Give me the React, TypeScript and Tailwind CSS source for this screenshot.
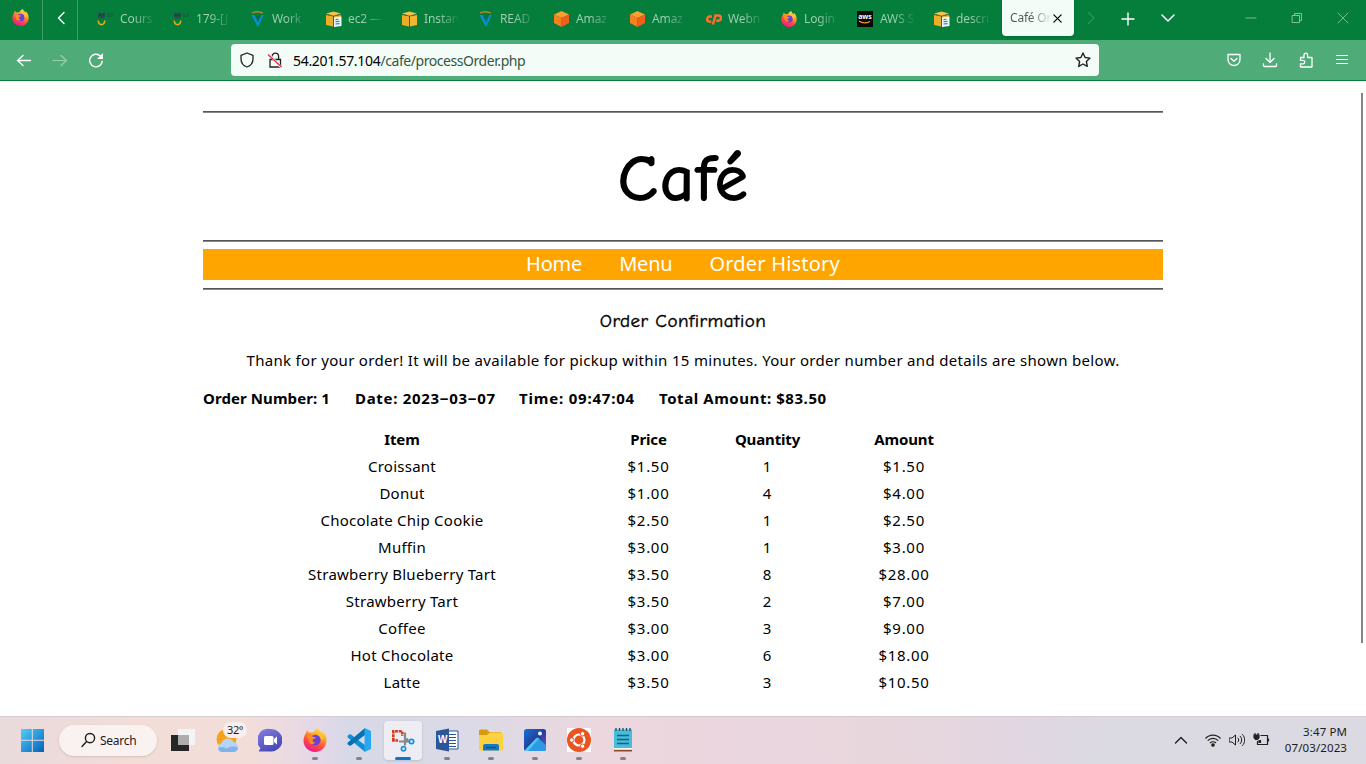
import React from "react";

type P = { size?: number };

const Fox = ({ size = 16 }: P) => (
  <svg width={size} height={size} viewBox="0 0 24 24" className="shrink-0">
    <defs>
      <linearGradient id="fx" x1="0.8" y1="0" x2="0.3" y2="1">
        <stop offset="0" stopColor="#fff14f" />
        <stop offset=".35" stopColor="#ffa026" />
        <stop offset=".65" stopColor="#ff4a45" />
        <stop offset="1" stopColor="#e8178c" />
      </linearGradient>
    </defs>
    <path d="M15.500 0c.4 2.600 2.200 3.700 3.700 5l.2-2c2.900 2.500 4.400 6 4.100 10C23.100 19.200 18.200 24 12 24 5.600 24 .6 19.200.5 12.800.5 9 2 6.300 3.500 4.500L3.700 2l2.700 2.800C8 4.300 9 4.500 10 4.800 11.500 2.500 13.200 1 15.500 0z" fill="url(#fx)" />
    <circle cx="12.300" cy="12" r="5.300" fill="#6b3fdc" />
    <path d="M4 8c3-1.500 4.500-.5 6 .8l3 .5c-.3 1.800-2.800 1.500-3.300 2.700-.2 1.500.8 2.700 2.800 2.300-2 2.700-5.500 2.200-6.500-.3C5 12 5.200 10 4 8z" fill="#ff8a22" />
    <path d="M12.500 5.500c3.500.5 5.500 3 5.500 6.500l2-1c0-4-3.500-6-7.500-5.500z" fill="#ffc535" />
  </svg>
);

const Owl = () => (
  <svg width="16" height="16" viewBox="0 0 16 16" className="shrink-0 overflow-visible">
    <path d="M1 1l2 1h3l2-1v5l-2 1.500H3L1 6z" fill="#25504a" />
    <path d="M10 3.200h2M13 3h3M10 5.200h3M14 5h2" stroke="#1b5a3e" strokeWidth="1.200" />
    <path d="M2.500 4h1.500M5.500 4H7" stroke="#123c38" strokeWidth="1.300" />
    <path d="M1.200 9.500c.5 5.500 6 5.500 6.600 0" fill="none" stroke="#e8a914" strokeWidth="1.600" />
  </svg>
);

const Vee = () => (
  <svg width="16" height="16" viewBox="0 0 16 16" className="shrink-0">
    <path d="M3 2C5.500.7 10.500.7 14 2" fill="none" stroke="#c98b28" strokeWidth="1.200" />
    <path d="M2.500 4h3L9 11.500 12.500 4h2.300L9.700 15H8.200z" fill="#078fd0" />
    <path d="M6 4h6L9 9z" fill="#0b6a5c" />
  </svg>
);

const Cube = ({ doc, plain }: { doc?: boolean; plain?: boolean }) => (
  <svg width="16" height="16" viewBox="0 0 16 16" className="shrink-0 overflow-visible">
    {plain ? (
      <>
        <path d="M8.500 0l7.500 3.500L8.500 7 1 3.500z" fill="#ff9d2e" />
        <path d="M1 3.500L8.500 7v9L1 12z" fill="#f58220" />
        <path d="M16 3.500L8.500 7v9l7.500-4z" fill="#f0601c" />
      </>
    ) : (
      <>
        <path d="M1 2.500L8.500.5l7.500 2-7.500 2.500z" fill="#f7c04a" />
        <path d="M1 4l7 1.300V15.500L1 14z" fill="#efad25" />
        <path d="M16 4L9 5.300v10.200l7-1.500z" fill="#f3b72e" />
        <path d="M1 3.200l7.500 2 7.500-2" stroke="#775f17" strokeWidth=".7" fill="none" />
        {doc && (
          <>
            <path d="M9 6.500l7.500-1v9.500L9 16z" fill="#eef7fc" />
            <path d="M10.500 8.600l3-.4M10.500 10.800l4-.4M10.500 13l4-.4" stroke="#257fbd" strokeWidth="1.100" />
          </>
        )}
      </>
    )}
  </svg>
);

const CPanel = () => (
  <svg width="17" height="16" viewBox="0 0 17 16" className="-mr-px shrink-0" fill="none" stroke="#ff6c2c" strokeWidth="2.500">
    <path d="M7 5.500H4.700a2.600 2.600 0 000 5.200h1.600" />
    <path d="M8 13.500l2.400-9h3a2.600 2.600 0 010 5.200h-2.200" />
  </svg>
);

const Aws = () => (
  <span className="flex h-4 w-4 shrink-0 flex-col items-center bg-[#080808] pt-[2px] text-[7px] font-bold leading-[7px] text-white">
    <span>aws</span>
    <svg width="12" height="4" viewBox="0 0 12 4"><path d="M0 1c4 3 8 2 11 .5" fill="none" stroke="#f49b20" strokeWidth="1.200" /></svg>
  </span>
);

const tabs: [React.ReactNode, string][] = [
  [<Owl />, "Cours"],
  [<Owl />, "179-[J"],
  [<Vee />, "Work"],
  [<Cube doc />, "ec2 —"],
  [<Cube />, "Instan"],
  [<Vee />, "READ"],
  [<Cube plain />, "Amaz"],
  [<Cube plain />, "Amaz"],
  [<CPanel />, "Webn"],
  [<Fox size={16} />, "Login"],
  [<Aws />, "AWS S"],
  [<Cube doc />, "descri"],
];

const Line = ({ d, size = 16, w = 1.300, className = "" }: { d: string; size?: number; w?: number; className?: string }) => (
  <svg width={size} height={size} viewBox="0 0 16 16" fill="none" stroke="currentColor" strokeWidth={w} strokeLinecap="round" strokeLinejoin="round" className={"shrink-0 " + className}>
    <path d={d} />
  </svg>
);

const TabStrip = () => (
  <div className="flex h-10 items-center bg-[#057d3b] text-white">
    <div className="flex h-10 w-[43px] items-center border-r border-[#409b69] pl-3 pb-[5px]"><Fox size={17} /></div>
    <div className="flex h-10 w-[35px] items-center justify-center border-r border-[#409b69] pb-1 pl-[3px]"><Line d="M10 2.500L4.500 8l5.500 5.500" w={1.400} /></div>
    <div className="flex w-[924px] pl-[19px]">
      {tabs.map(([icon, label], i) => (
        <div key={i} className="flex w-[76px] shrink-0 items-center pb-[3px]">
          {icon}
          <span className="ml-[7px] w-[38px] whitespace-nowrap bg-[linear-gradient(90deg,#a4d0b6_14px,#0b8040_35px)] bg-clip-text text-[12px] leading-4 tracking-[-0.1px] text-transparent">{label}</span>
        </div>
      ))}
    </div>
    <div className="mb-1 flex h-9 w-[72px] items-center rounded-b bg-[#f4fcf7] pl-2 shadow">
      <span className="w-[43px] whitespace-nowrap bg-[linear-gradient(90deg,#4d5850_20px,#f0f8f3_42px)] bg-clip-text text-[12px] leading-4 tracking-[-0.2px] text-transparent">Café Or</span>
      <Line d="M3.500 3.500l9 9M12.500 3.500l-9 9" size={13} w={1.500} className="-ml-[2px] text-black" />
    </div>
    <Line d="M5.500 2.500L11 8l-5.500 5.500" className="mb-1 ml-[9px] text-[#2f9160]" />
    <Line d="M8 2v12M2 8h12" w={1.400} className="mb-[3px] ml-[21px]" />
    <Line d="M2 5l6 6 6-6" w={1.500} className="mb-1 ml-6" />
    <Line d="M3 8h10" w={0.9} className="mb-1 ml-[67px] text-[#87c0a0]" />
    <Line d="M3.500 5.500h7v7h-7zM5.500 5.300V3.500h7v7h-1.800" w={1} className="mb-1 ml-[30px] text-[#87c0a0]" />
    <Line d="M3 3l10 10M13 3L3 13" w={0.9} className="mb-1 ml-[30px] text-[#87c0a0]" />
  </div>
);

const Toolbar = () => (
  <div className="flex h-[41px] items-center border-b border-[#057d3b] bg-[#4fac78] pl-4 text-white">
    <Line d="M14.500 8.500H1.500M7 3.500l-5.500 5 5.500 5" w={1.300} />
    <Line d="M1 8.500h13.500M9 3.500l5.500 5-5.500 5" w={1.200} className="ml-5 text-[#98ceb0]" />
    <svg width="16" height="16" viewBox="0 0 16 16" fill="none" stroke="currentColor" strokeWidth="1.400" className="ml-5">
      <path d="M14.300 8.700a6.300 6.300 0 11-1.800-4.600l1 1" /><path d="M15 1v6H9z" fill="currentColor" stroke="none" />
    </svg>
    <div className="ml-[127px] flex h-8 w-[868px] items-center rounded bg-[#f4fcf7] pl-2 text-[#222]">
      <Line d="M8 1l6 2.300v3.500C14 11.500 11 14 8 15c-3-1-6-3.500-6-8.200V3.300z" w={1.300} />
      <svg width="16" height="16" viewBox="0 0 16 16" fill="none" className="ml-3">
        <path d="M3 7.500h10.500V15H3zM5 7.500V4.500a3.300 3.300 0 016.600 0v3" stroke="#222" strokeWidth="1.300" />
        <path d="M1.500 2l13 13.500" stroke="#f4fcf7" strokeWidth="2.500" />
        <path d="M1 2.500L14.500 15" stroke="#e8274f" strokeWidth="1.300" />
      </svg>
      <span className="ml-[10px] grow pt-[2px] text-[14px] leading-5 tracking-[-0.300px] text-black">54.201.57.104<span className="tracking-[-0.440px] text-[#355644]">/cafe/processOrder.php</span></span>
      <Line d="M8 1l2.100 4.500 4.900.6-3.600 3.400.9 4.900L8 12l-4.300 2.400.9-4.900L1 6.100l4.900-.6z" w={1.400} className="mr-2 text-[#222]" />
    </div>
    <Line d="M2 2.500h12v5a6 6 0 01-12 0zM5 6.500l3 2.800 3-2.800" w={1.300} className="ml-[127px]" />
    <Line d="M8 .8v9.500M4 6.500l4 4 4-4M1.500 12v1.500c0 .6.400 1 1 1h11c.6 0 1-.4 1-1V12" w={1.300} className="ml-5" />
    <Line d="M2.500 5.500H6V3a1.800 1.800 0 013.600 0v2.500H14v9.500H2.500v-3.200H5a1.700 1.700 0 000-3.500H2.500z" w={1.300} className="ml-5" />
    <Line d="M2.500 3.500h11M2.500 7.500h11M2.500 11.500h11" w={1.200} className="ml-5" />
  </div>
);

const rows = [
  ["Croissant", "$1.50", "1", "$1.50"],
  ["Donut", "$1.00", "4", "$4.00"],
  ["Chocolate Chip Cookie", "$2.50", "1", "$2.50"],
  ["Muffin", "$3.00", "1", "$3.00"],
  ["Strawberry Blueberry Tart", "$3.50", "8", "$28.00"],
  ["Strawberry Tart", "$3.50", "2", "$7.00"],
  ["Coffee", "$3.00", "3", "$9.00"],
  ["Hot Chocolate", "$3.00", "6", "$18.00"],
  ["Latte", "$3.50", "3", "$10.50"],
];

const Rule = () => <hr className="h-[2px] border-0 border-t border-[#555] bg-[#888]" />;

const Page = () => (
  <div className="flex h-[635px] justify-between bg-white text-black">
    <main className="ml-[203px] w-[960px] pt-[30px] text-[15px]">
      <Rule />
      <h1 className="flex h-[127px] items-center justify-center pl-[2px] pt-[6px] font-['Comic_Sans_MS','Comic_Neue','Noto_Sans',sans-serif] text-[65px] font-medium tracking-[2.500px] [-webkit-text-stroke:2px_black]">Café</h1>
      <Rule />
      <nav className="mt-[7px] flex h-[31px] items-center justify-center gap-[37px] bg-[#ffa500] pb-[2px] text-[20px] text-white">
        <a className="tracking-[-0.200px]">Home</a><a className="tracking-[-0.200px]">Menu</a><a className="tracking-[0.200px]">Order History</a>
      </nav>
      <div className="pt-2"><Rule /></div>
      <h2 className="mt-[19px] text-center font-['Comic_Sans_MS','Comic_Neue','Noto_Sans',sans-serif] text-[19px] leading-6 tracking-[0.480px] [-webkit-text-stroke:0.400px_black]">Order Confirmation</h2>
      <p className="mt-[15px] whitespace-nowrap text-center leading-6 tracking-[0.315px]">Thank for your order! It will be available for pickup within 15 minutes. Your order number and details are shown below.</p>
      <p className="mt-[14px] flex whitespace-nowrap font-bold leading-6">
        <span className="w-[152px] tracking-[0.080px]">Order Number: 1</span>
        <span className="w-[164px] tracking-[0.700px]">Date: 2023‒03‒07</span>
        <span className="w-[140px] tracking-[0.800px]">Time: 09:47:04</span>
        <span className="tracking-[0.560px]">Total Amount: $83.50</span>
      </p>
      <table className="mt-4 w-[766px] table-fixed text-center leading-[27px]">
        <colgroup><col className="w-[398px]" /><col className="w-[95px]" /><col className="w-[143px]" /><col className="w-[130px]" /></colgroup>
        <thead><tr className="tracking-[-0.150px]">{["Item", "Price", "Quantity", "Amount"].map((h) => <th key={h}>{h}</th>)}</tr></thead>
        <tbody>{rows.map((r) => <tr key={r[0]}>{r.map((c, i) => <td key={i} className={i === 0 ? "tracking-[0.250px]" : "tracking-[0.700px]"}>{c}</td>)}</tr>)}</tbody>
      </table>
    </main>
    <div className="mr-[3px] mt-3 h-[550px] w-[2px] bg-[#858585]" />
  </div>
);

const WinLogo = () => (
  <svg width="24" height="24" viewBox="0 0 24 24">
    <defs><linearGradient id="wl" x1="0" y1="0" x2="1" y2="1"><stop stopColor="#4fd0fb" /><stop offset="1" stopColor="#0560b8" /></linearGradient></defs>
    <path d="M1 1h10.800v10.800H1zM12.800 1H24v10.800H12.800zM1 12.800h10.800V24H1zM12.800 12.800H24V24H12.800z" fill="url(#wl)" />
  </svg>
);
const TaskView = () => (
  <svg width="24" height="24" viewBox="0 0 24 24">
    <path d="M0 7h18v16H0z" fill="#262626" /><path d="M7 1h17v16H7z" fill="#f4f4f4" /><path d="M7 7h11v10H7z" fill="#adadad" />
  </svg>
);
const Weather = () => (
  <svg width="24" height="24" viewBox="0 0 24 24">
    <circle cx="10.500" cy="11" r="10" fill="#f6a21b" />
    <path d="M6 24a4.500 4.500 0 01-.5-8.800A6.500 6.500 0 0117.500 14a5.200 5.200 0 011 10z" fill="#b4d4f8" />
    <path d="M2 20c3-1.500 6-1 9 .5 3-2.500 7-2.500 11-1a4.800 4.800 0 01-3.500 4.500H6a4.500 4.500 0 01-4-4z" fill="#80b2ec" />
  </svg>
);
const Chat = () => (
  <svg width="24" height="24" viewBox="0 0 24 24">
    <defs><linearGradient id="ch" x1="0" y1="0" x2=".6" y2="1"><stop stopColor="#8a80e0" /><stop offset="1" stopColor="#4548b5" /></linearGradient></defs>
    <path d="M12 1a11.300 11.300 0 110 22.500H1.500c-.7 0-.7-.8-.3-1.300l1.300-2A11.300 11.300 0 0112 1z" fill="url(#ch)" />
    <rect x="6" y="8" width="9.500" height="9" rx="1.500" fill="#fff" /><path d="M16 11l3-2.500v8L16 14z" fill="#fff" />
  </svg>
);
const Code = () => (
  <svg width="24" height="24" viewBox="0 0 24 24">
    <path d="M.5 9.200V7.800l2.700-1.800L18 17v7z" fill="#0a91d8" />
    <path d="M18 0v7L3.200 18l-2.700-1.700V14.800z" fill="#0870b4" />
    <path d="M17.500 0L24 3v18l-6.500 3z" fill="#29a7ee" />
  </svg>
);
const Snip = () => (
  <svg width="24" height="24" viewBox="0 0 24 24" fill="none">
    <path d="M2.300 13V3.200h9V8" stroke="#d83b17" strokeWidth="2.600" strokeDasharray="3 .8" />
    <path d="M1 12.500h6" stroke="#d83b17" strokeWidth="2.600" strokeDasharray="2.600 .8" />
    <path d="M14 4.500v13M8 13.500h10M17 10.500l-3 4" stroke="#85888d" strokeWidth="2.200" />
    <circle cx="20.500" cy="13.500" r="2.200" stroke="#1495dc" strokeWidth="1.700" /><circle cx="12.500" cy="20.700" r="2.100" stroke="#1495dc" strokeWidth="1.700" />
  </svg>
);
const Word = () => (
  <span className="relative flex h-6 w-6">
    <svg width="24" height="24" viewBox="0 0 24 24">
      <path d="M12 3h11v18H12z" fill="#fff" stroke="#2b579a" /><path d="M14 6.500h7M14 9.500h7M14 12.500h7M14 15.500h7M14 18.500h7" stroke="#2b579a" />
      <path d="M1 3L14 .5v23L1 21z" fill="#2b579a" />
    </svg>
    <span className="absolute left-[3px] top-[6px] font-['Liberation_Sans',sans-serif] text-[10px] font-bold leading-3 text-white">W</span>
  </span>
);
const Folder = () => (
  <svg width="24" height="24" viewBox="0 0 24 24">
    <path d="M0 3a1.500 1.500 0 011.500-1.500H8l2.500 2.500H22V12H0z" fill="#d99a10" /><path d="M0 7h8l3-2.500h11.500A1.500 1.500 0 0124 6v15a1.500 1.500 0 01-1.500 1.500h-21A1.500 1.500 0 010 21z" fill="#fdd142" />
    <path d="M4 22.500V18a2 2 0 012-2h12a2 2 0 012 2v4.500z" fill="#1479c4" /><path d="M7 19.500h10" stroke="#0a4f8c" strokeWidth="1.300" />
  </svg>
);
const Photos = () => (
  <svg width="24" height="24" viewBox="0 0 24 24">
    <defs><linearGradient id="ph" x1="0" y1="0" x2="1" y2="1"><stop stopColor="#1575d4" /><stop offset=".5" stopColor="#253d9c" /><stop offset="1" stopColor="#7857b8" /></linearGradient></defs>
    <rect x="1" y="1" width="22" height="22" rx="2.500" fill="url(#ph)" /><path d="M2 22L13 10.500c1-1 2-1 3 0l7 7V21a2 2 0 01-2 2H3z" fill="#2d9ae4" /><path d="M2 22L13 10.500c1-1 2-1 3 0L5 23H3z" fill="#51c7ef" />
    <circle cx="17" cy="5.500" r="2" fill="#e8f5ff" />
  </svg>
);
const Ubuntu = () => (
  <svg width="24" height="24" viewBox="0 0 24 24">
    <path d="M0 0h24v24H0z" fill="#fff" /><circle cx="12" cy="12" r="12" fill="#e95420" />
    <circle cx="12" cy="12" r="5.500" fill="none" stroke="#fff" strokeWidth="2.200" />
    <g fill="#fff" stroke="#e95420" strokeWidth="1"><circle cx="4.800" cy="12" r="2.200" /><circle cx="15.600" cy="5.800" r="2.200" /><circle cx="15.600" cy="18.200" r="2.200" /></g>
  </svg>
);
const Notes = () => (
  <svg width="24" height="24" viewBox="0 0 24 24">
    <path d="M3 20h18v3.500H3z" fill="#8c4a24" /><path d="M3 1.500h18v20H3z" fill="#48bdd9" /><path d="M3 20h18v1.800H3z" fill="#f4f4f4" />
    <path d="M5 0v3M8.500 0v3M12 0v3M15.500 0v3M19 0v3" stroke="#174d66" strokeWidth="1.300" /><path d="M6 7.500h12M6 11.500h12M6 15.500h12" stroke="#136080" strokeWidth="1.400" />
  </svg>
);

const apps = [<Fox size={24} />, <Code />, <Snip />, <Word />, <Folder />, <Photos />, <Ubuntu />, <Notes />];

const Taskbar = () => (
  <div className="flex h-12 items-center border-t border-[#d5ccd1] bg-[linear-gradient(90deg,#e9dadc_0px,#f2ddd8_130px,#f2ddd9_250px,#e5d8e7_315px,#d7d9e7_350px,#dcdae6_480px,#ecd7de_600px,#ebd6df_720px,#e8d6dd_900px,#e2d6e1_1000px,#dbd9e2_1100px,#dbd9e1_1366px)] pb-px pl-5 text-[#1c1c1c]">
    <WinLogo />
    <div className="ml-[15px] flex h-[31px] w-[98px] items-center rounded-full bg-[#f9f2f1] pl-[21px] shadow-sm">
      <Line d="M10 1.500a4.600 4.600 0 110 9.200 4.600 4.600 0 010-9.200M6.600 9.500L2 14.500" w={1.400} />
      <span className="ml-[4px] pt-px text-[12px] leading-4 tracking-[-0.250px]">Search</span>
    </div>
    <div className="ml-[14px]"><TaskView /></div>
    <div className="relative ml-[21px]"><Weather /><span className="absolute -top-[6px] left-[7px] flex h-4 w-6 items-center justify-center rounded-full bg-[#f7efed] text-[11px] leading-4 tracking-[-0.500px]">32°</span></div>
    <div className="ml-[18px]"><Chat /></div>
    <div className="ml-[14px] flex gap-[6px]">
      {apps.map((a, i) => (
        <div key={i} className={i === 2 ? "relative flex h-[39px] w-[38px] items-center justify-center rounded bg-[#eeedf3] shadow-sm" : "relative flex h-[39px] w-[38px] items-center justify-center"}>
          {a}
          <span className={i === 2 ? "absolute bottom-0 left-[11px] h-[3px] w-4 rounded-full bg-[#0877cc]" : "absolute bottom-0 left-4 h-[3px] w-[6px] rounded-full bg-[#85818a]"} />
        </div>
      ))}
    </div>
    <Line d="M2.500 11L8 5.500l5.500 5.500" w={1.300} className="ml-auto" />
    <svg width="16" height="16" viewBox="0 0 16 16" fill="none" stroke="#222" strokeWidth="1.200" className="ml-4">
      <path d="M.5 6.500c4-4.500 11-4.500 15 0M2.700 8.700c3-3.200 7.600-3.200 10.600 0M5 11c1.700-1.700 4.300-1.700 6 0" /><circle cx="8" cy="13" r="1.200" fill="#222" />
    </svg>
    <Line d="M.5 6h2.500l3.500-3v10L3 10H.5zM9 6c1 1 1 3 0 4M11.200 4.200c2 2 2 5.500 0 7.500M13.500 2.500c3 3 3 8 0 11" w={1} className="ml-2" />
    <svg width="17" height="16" viewBox="0 0 17 16" fill="none" stroke="#222" strokeWidth="1.200" className="ml-2">
      <path d="M7.500 3.500h7v9h-10V9M15.500 6.500v3" /><path d="M1 3h5v2.500L4.500 7.500h-2L1 5.500z" fill="#222" /><path d="M2 1v3M5 1v3" /><path d="M6 10.500V8.500h1.500v2z" fill="#222" />
    </svg>
    <div className="ml-[13px] mr-[19px] w-[64px] whitespace-nowrap text-right text-[11.500px] leading-4 tracking-[0.100px]"><div>3:47 PM</div><div>07/03/2023</div></div>
  </div>
);

export default function App() {
  return (
    <div className="flex h-[764px] w-[1366px] flex-col overflow-hidden font-['Noto_Sans','Open_Sans',sans-serif]">
      <TabStrip />
      <Toolbar />
      <Page />
      <Taskbar />
    </div>
  );
}
